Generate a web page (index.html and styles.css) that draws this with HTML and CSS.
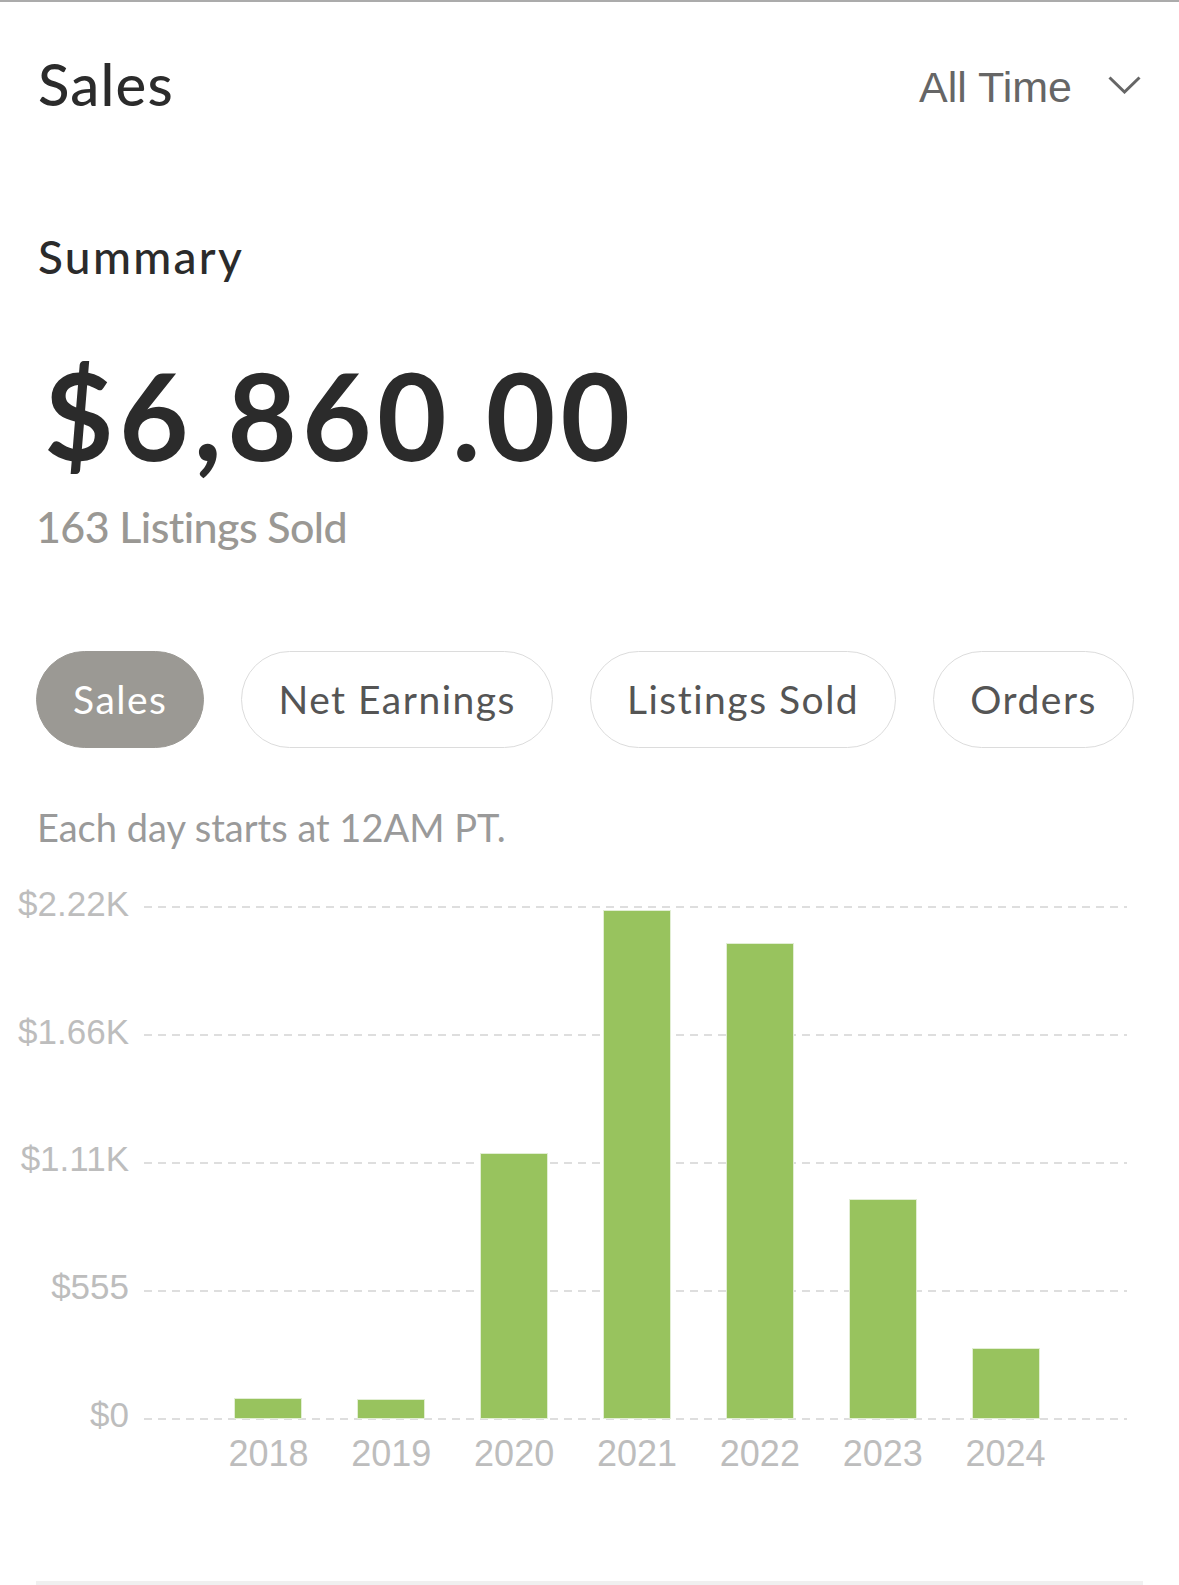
FILE: index.html
```html
<!DOCTYPE html>
<html lang="en">
<head>
  <meta charset="UTF-8">
  <meta name="viewport" content="width=device-width, initial-scale=1.0">
  <title>Sales</title>
  <link rel="stylesheet" href="styles.css">
</head>
<body>
  <div class="page">
    <div class="header">
      <h1 class="title">Sales</h1>
      <div class="range">
        <span>All Time</span>
        <svg class="chevron" width="33" height="18" viewBox="0 0 33 18">
          <path d="M1.5 1.5 L16.5 16 L31.5 1.5" fill="none" stroke="#666" stroke-width="3"/>
        </svg>
      </div>
    </div>

    <h2 class="summary-title">Summary</h2>
    <div class="total">$6,860.00</div>
    <div class="sold">163 Listings Sold</div>

    <div class="tabs">
      <div class="tab active">Sales</div>
      <div class="tab">Net Earnings</div>
      <div class="tab">Listings Sold</div>
      <div class="tab">Orders</div>
    </div>

    <p class="note">Each day starts at 12AM PT.</p>
  </div>

  <!-- bar chart -->
  <div class="chart">
    <div class="grid">
      <div class="grid-row"><span class="y-label">$2.22K</span><span class="grid-line"></span></div>
      <div class="grid-row"><span class="y-label">$1.66K</span><span class="grid-line"></span></div>
      <div class="grid-row"><span class="y-label">$1.11K</span><span class="grid-line"></span></div>
      <div class="grid-row"><span class="y-label">$555</span><span class="grid-line"></span></div>
      <div class="grid-row"><span class="y-label">$0</span><span class="grid-line"></span></div>
    </div>
    <div class="bars">
      <div class="slot"><div class="bar" style="height: 19px"></div></div>
      <div class="slot"><div class="bar" style="height: 18px"></div></div>
      <div class="slot"><div class="bar" style="height: 264px"></div></div>
      <div class="slot"><div class="bar" style="height: 507px"></div></div>
      <div class="slot"><div class="bar" style="height: 474px"></div></div>
      <div class="slot"><div class="bar" style="height: 218px"></div></div>
      <div class="slot"><div class="bar" style="height: 69px"></div></div>
    </div>
    <div class="years">
      <span class="year">2018</span>
      <span class="year">2019</span>
      <span class="year">2020</span>
      <span class="year">2021</span>
      <span class="year">2022</span>
      <span class="year">2023</span>
      <span class="year">2024</span>
    </div>
  </div>

  <div class="divider"></div>
</body>
</html>
```

FILE: styles.css
```css
body {
  margin: 0;
  font-family: Lato, "Noto Sans", sans-serif;
  background: #fff;
  color: #2b2b2b;
  border-top: 2px solid #ababab;
}
.page {
  padding: 0 38px;
}
.header {
  display: flex;
  justify-content: space-between;
  align-items: center;
  height: 70px;
  margin-top: 47px;
}
.title {
  margin: 0;
  font-size: 58px;
  font-weight: 500;
  line-height: 1.2;
  letter-spacing: 1.2px;
}
.range {
  display: flex;
  align-items: center;
  gap: 36px;
  padding-top: 6px;
  font-family: "Liberation Sans", Arial, sans-serif;
  font-size: 43px;
  color: #666;
}
.chevron {
  display: block;
  margin-top: -4px;
}
.summary-title {
  margin: 110px 0 0;
  font-size: 46px;
  font-weight: 500;
  line-height: 1.2;
  letter-spacing: 2.3px;
}
.total {
  margin-top: 59px;
  margin-left: 6px;
  font-size: 120px;
  font-weight: 700;
  line-height: 1.2;
  letter-spacing: 5.3px;
  color: #2b2b2b;
}
.sold {
  margin-top: 14px;
  margin-left: -2px;
  font-size: 43px;
  font-weight: 500;
  line-height: 1.2;
  letter-spacing: -0.6px;
  color: #9a9894;
}
.tabs {
  display: flex;
  gap: 37px;
  margin: 98px 0 0 -2px;
}
.tab {
  height: 97px;
  box-sizing: border-box;
  display: flex;
  align-items: center;
  padding: 0 36px;
  border: 1.5px solid #dcdcdc;
  border-radius: 49px;
  font-size: 39px;
  line-height: 1.2;
  letter-spacing: 1.5px;
  color: #555;
}
.tab.active {
  background: #9b9994;
  border-color: #9b9994;
  color: #fff;
}
.note {
  margin: 57px 0 0 -1px;
  font-size: 38px;
  line-height: 1.2;
  color: #9a9a9a;
}
.chart {
  position: relative;
  margin-top: 47px;
  padding-right: 52px;
}
.grid {
  display: flex;
  flex-direction: column;
  gap: 107.8px;
}
.grid-row {
  display: flex;
  align-items: center;
  gap: 15px;
  height: 20px;
}
.y-label {
  width: 129px;
  padding-bottom: 7px;
  text-align: right;
  font-family: "Liberation Sans", Arial, sans-serif;
  font-size: 35px;
  color: #bdbdbd;
}
.grid-line {
  flex: 1;
  height: 2px;
  background: repeating-linear-gradient(to right, #dedede 0 8px, transparent 8px 14px);
}
.bars {
  position: absolute;
  top: 10px;
  left: 207px;
  width: 860px;
  height: 511px;
  display: flex;
  align-items: flex-end;
}
.slot {
  flex: 1;
  display: flex;
  justify-content: center;
}
.bar {
  width: 66px;
  background: #98c35e;
  box-shadow: 0 0 0 1px #e2eed4;
}
.years {
  display: flex;
  margin: 4px 0 0 207px;
  width: 860px;
}
.year {
  flex: 1;
  text-align: center;
  font-family: "Liberation Sans", Arial, sans-serif;
  font-size: 36px;
  color: #bdbdbd;
}
.divider {
  height: 5px;
  margin: 106px 36px 0;
  background: #f0f0f0;
}
```
